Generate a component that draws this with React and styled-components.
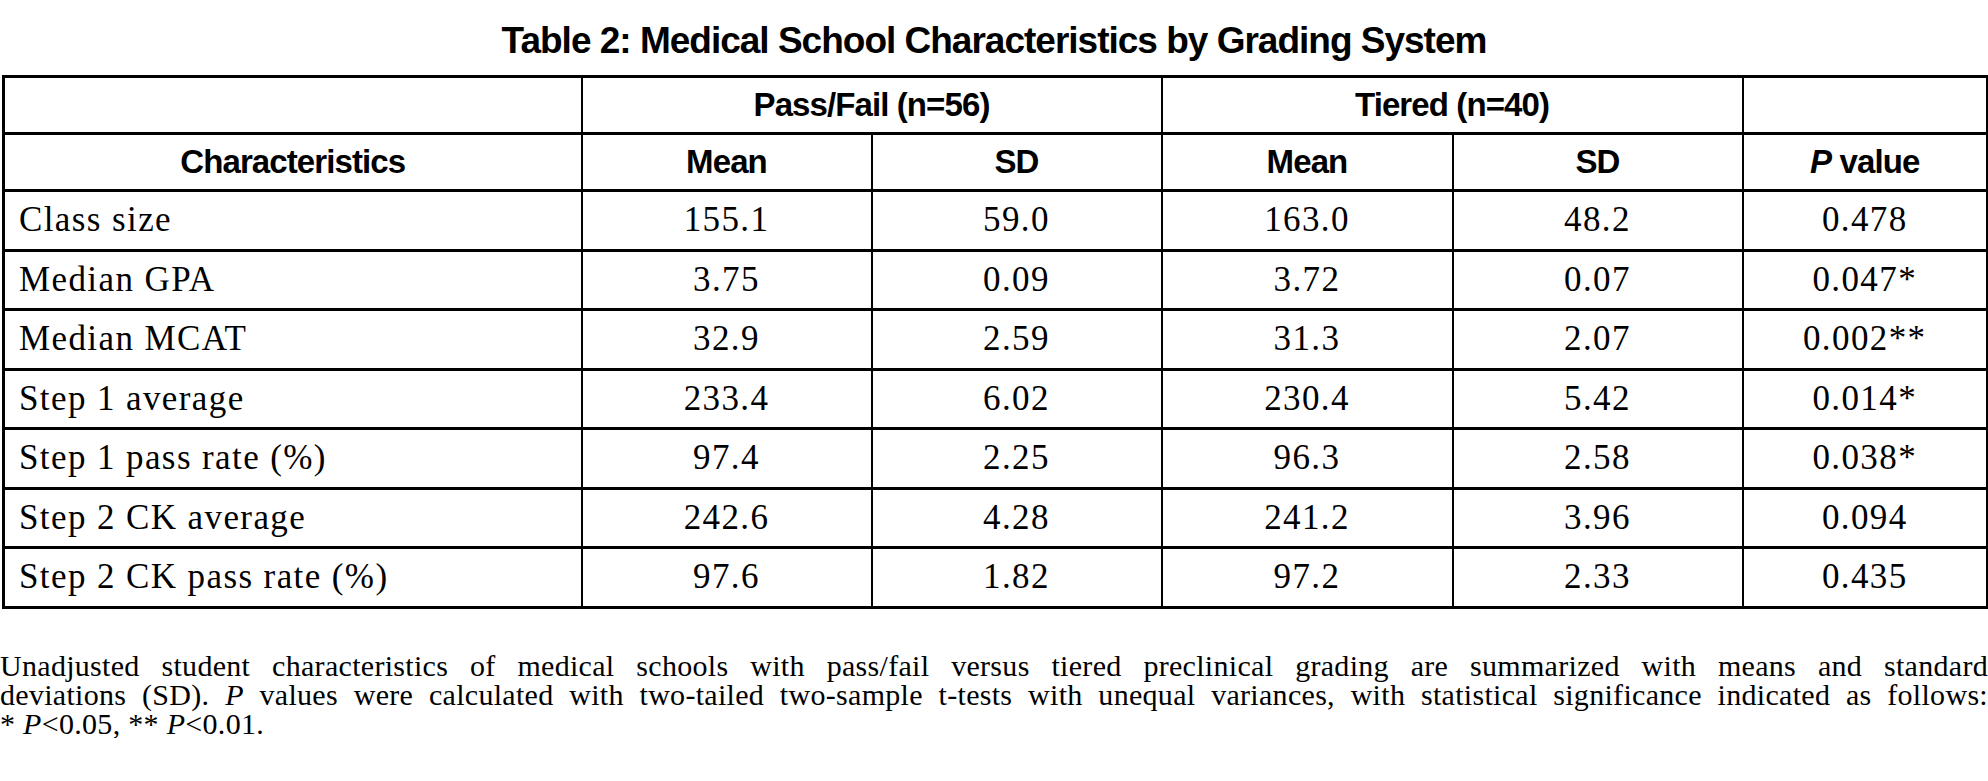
import React from 'react';
import styled, { createGlobalStyle } from 'styled-components';

const GlobalStyle = createGlobalStyle`
  html, body {
    margin: 0;
    padding: 0;
    background: #fff;
    color: #000;
  }
`;

const Page = styled.div`
  width: 1988px;
  padding-top: 20px;
`;

const Title = styled.h1`
  margin: 0 0 13px;
  font-family: "Liberation Sans", Arial, sans-serif;
  font-weight: 700;
  font-size: 37px;
  line-height: 42px;
  letter-spacing: -1px;
  text-align: center;
`;

const Table = styled.table`
  margin-left: 2px;
  width: 1984px;
  table-layout: fixed;
  border-collapse: collapse;
  border: 3px solid #000;
`;

const HeadRow = styled.tr`
  height: 57px;
`;

const BodyRow = styled.tr`
  height: 59.5px;
`;

const Th = styled.th`
  padding: 0;
  border-style: solid;
  border-color: #000;
  border-width: 3px 2px;
  font-family: "Liberation Sans", Arial, sans-serif;
  font-weight: 700;
  font-size: 33px;
  letter-spacing: -0.9px;
  text-align: center;
  vertical-align: middle;
`;

const Td = styled.td`
  padding: 0 0 0 ${p => (p.$label ? '14px' : '0')};
  border-style: solid;
  border-color: #000;
  border-width: 3px 2px;
  font-family: "Liberation Serif", "Times New Roman", serif;
  font-size: 35px;
  letter-spacing: 1.4px;
  text-align: ${p => (p.$label ? 'left' : 'center')};
  vertical-align: middle;
`;

const Caption = styled.div`
  margin-top: 42px;
  font-family: "Liberation Serif", "Times New Roman", serif;
  font-size: 30px;
  line-height: 29px;
  letter-spacing: 0.3px;
`;

const CaptionLine = styled.div`
  text-align: justify;
  text-align-last: ${p => (p.$last ? 'left' : 'justify')};
`;

const columns = [578, 290, 290, 291, 290, 245];

const rows = [
  ['Class size', '155.1', '59.0', '163.0', '48.2', '0.478'],
  ['Median GPA', '3.75', '0.09', '3.72', '0.07', '0.047*'],
  ['Median MCAT', '32.9', '2.59', '31.3', '2.07', '0.002**'],
  ['Step 1 average', '233.4', '6.02', '230.4', '5.42', '0.014*'],
  ['Step 1 pass rate (%)', '97.4', '2.25', '96.3', '2.58', '0.038*'],
  ['Step 2 CK average', '242.6', '4.28', '241.2', '3.96', '0.094'],
  ['Step 2 CK pass rate (%)', '97.6', '1.82', '97.2', '2.33', '0.435'],
];

export default function App() {
  return (
    <Page>
      <GlobalStyle />
      <Title>Table 2: Medical School Characteristics by Grading System</Title>
      <Table>
        <colgroup>
          {columns.map((w, i) => (
            <col key={i} style={{ width: w }} />
          ))}
        </colgroup>
        <thead>
          <HeadRow>
            <Th />
            <Th colSpan={2}>Pass/Fail (n=56)</Th>
            <Th colSpan={2}>Tiered (n=40)</Th>
            <Th />
          </HeadRow>
          <HeadRow>
            <Th>Characteristics</Th>
            <Th>Mean</Th>
            <Th>SD</Th>
            <Th>Mean</Th>
            <Th>SD</Th>
            <Th>
              <i>P</i> value
            </Th>
          </HeadRow>
        </thead>
        <tbody>
          {rows.map(r => (
            <BodyRow key={r[0]}>
              {r.map((v, i) => (
                <Td key={i} $label={i === 0}>
                  {v}
                </Td>
              ))}
            </BodyRow>
          ))}
        </tbody>
      </Table>
      <Caption>
        <CaptionLine>
          Unadjusted student characteristics of medical schools with pass/fail versus tiered preclinical grading are summarized with means and standard
        </CaptionLine>
        <CaptionLine>
          deviations (SD). <i>P</i> values were calculated with two-tailed two-sample t-tests with unequal variances, with statistical significance indicated as follows:
        </CaptionLine>
        <CaptionLine $last>
          * <i>P</i>&lt;0.05, ** <i>P</i>&lt;0.01.
        </CaptionLine>
      </Caption>
    </Page>
  );
}
